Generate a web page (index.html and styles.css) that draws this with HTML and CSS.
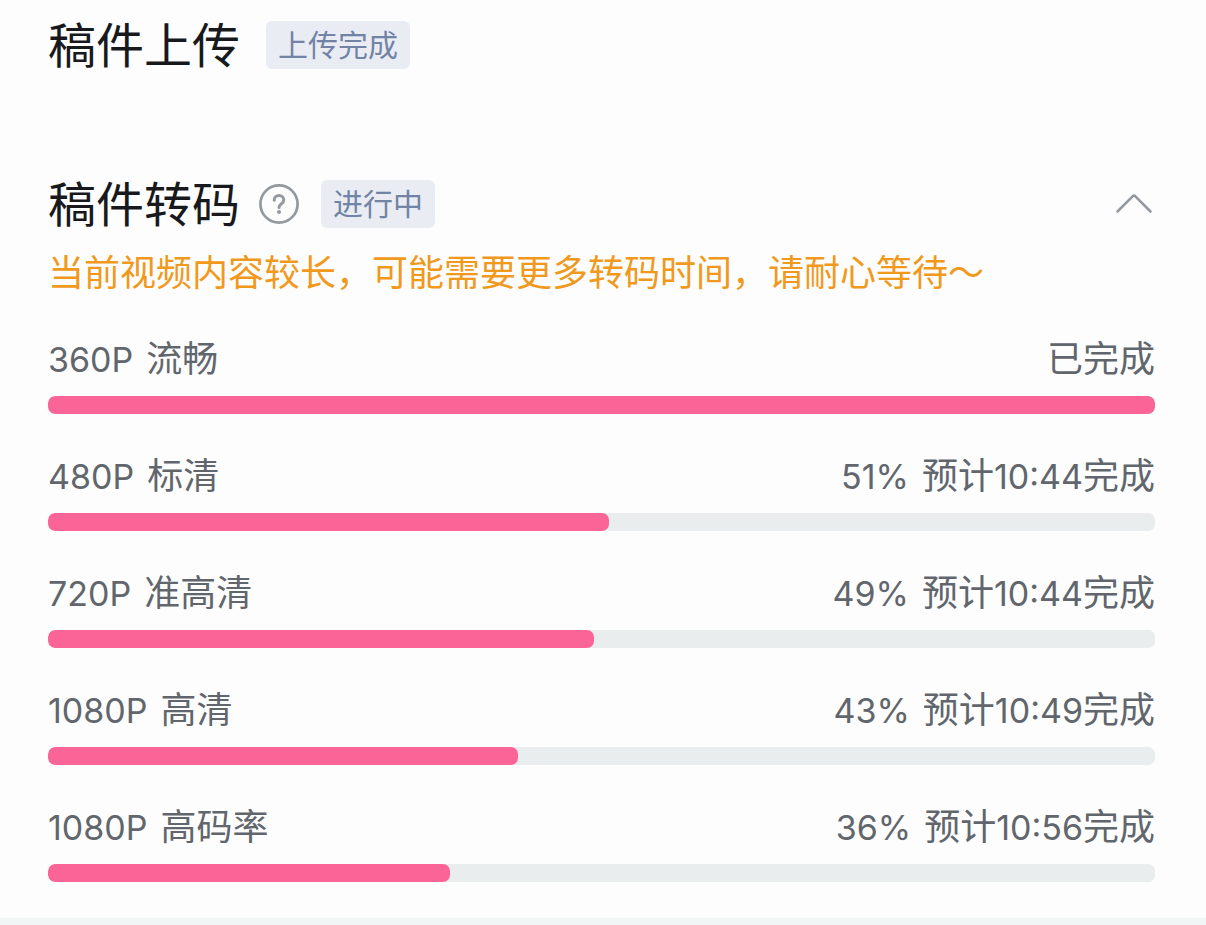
FILE: index.html
```html
<!DOCTYPE html>
<html lang="zh-CN">
<head>
  <meta charset="UTF-8">
  <meta name="viewport" content="width=device-width, initial-scale=1.0">
  <title>稿件进度</title>
  <link rel="stylesheet" href="styles.css">
</head>
<body>
  <main class="panel">
    <section class="upload">
      <div class="section-head">
        <h2>稿件上传</h2>
        <span class="badge badge-upload">上传完成</span>
      </div>
    </section>

    <section class="transcode">
      <div class="section-head">
        <h2>稿件转码</h2>
        <button class="icon-btn help-btn" type="button" aria-label="转码说明">
          <svg width="40" height="40" viewBox="0 0 40 40" fill="none" stroke="currentColor" stroke-linecap="round" stroke-linejoin="round">
            <circle cx="20" cy="20" r="18.6" stroke-width="2.7"/>
            <path d="M15.2 16.2c0-2.9 2-4.7 4.8-4.7s4.8 1.9 4.8 4.5c0 2-1.2 3-2.6 4-1.4 1-2.2 1.7-2.2 3.500" stroke-width="3"/>
            <circle cx="20" cy="28" r="2.1" fill="currentColor" stroke="none"/>
          </svg>
        </button>
        <span class="badge">进行中</span>
        <button class="icon-btn toggle-btn" type="button" aria-label="收起">
          <svg width="40" height="24" viewBox="0 0 40 24" fill="none" stroke="currentColor" stroke-width="2.6" stroke-linecap="round" stroke-linejoin="round">
            <path d="M2.5 19.5L17.6 4.3Q19 3 20.4 4.3L35.5 19.5"/>
          </svg>
        </button>
      </div>
      <p class="notice">当前视频内容较长，可能需要更多转码时间，请耐心等待～</p>

      <ul class="task-list">
        <li class="task">
          <div class="task-info"><label for="p360"><span class="num">360P</span> 流畅</label><span>已完成</span></div>
          <progress id="p360" value="1000" max="1000"></progress>
        </li>
        <li class="task">
          <div class="task-info"><label for="p480"><span class="num">480P</span> 标清</label><span><span class="num">51%</span> 预计<span class="num">10:44</span>完成</span></div>
          <progress id="p480" value="507" max="1000"></progress>
        </li>
        <li class="task">
          <div class="task-info"><label for="p720"><span class="num">720P</span> 准高清</label><span><span class="num">49%</span> 预计<span class="num">10:44</span>完成</span></div>
          <progress id="p720" value="493" max="1000"></progress>
        </li>
        <li class="task">
          <div class="task-info"><label for="p1080"><span class="num">1080P</span> 高清</label><span><span class="num">43%</span> 预计<span class="num">10:49</span>完成</span></div>
          <progress id="p1080" value="425" max="1000"></progress>
        </li>
        <li class="task">
          <div class="task-info"><label for="p1080h"><span class="num">1080P</span> 高码率</label><span><span class="num">36%</span> 预计<span class="num">10:56</span>完成</span></div>
          <progress id="p1080h" value="363" max="1000"></progress>
        </li>
      </ul>
    </section>
  </main>
</body>
</html>
```
FILE: styles.css
```css
* {
  box-sizing: border-box;
}

body {
  margin: 0;
  background: #f2f5f6;
  font-family: "Liberation Sans", "Noto Sans CJK SC", sans-serif;
  color: #61666d;
}

.panel {
  background: #fdfdfd;
  padding: 21px 51px 36px 48px;
}

.upload {
  margin-bottom: 111px;
}

.section-head {
  display: flex;
  align-items: center;
  height: 48px;
}

h2 {
  margin: 0;
  padding-top: 4px;
  font-size: 48px;
  line-height: 48px;
  font-weight: 400;
  color: #18191c;
}

.badge {
  height: 48px;
  margin-left: 22px;
  padding: 0 12px;
  border-radius: 6px;
  background: #e9edf3;
  color: #7283a6;
  font-size: 30px;
  line-height: 50px;
}

.badge-upload {
  margin-left: 26px;
}

.icon-btn {
  display: flex;
  padding: 0;
  border: none;
  background: none;
  color: #9499a0;
  cursor: pointer;
}

.help-btn {
  margin-left: 19px;
}

.toggle-btn {
  margin-left: auto;
}

/* 提示 */
.notice {
  margin: 21px 0 35px;
  font-size: 36px;
  line-height: 50px;
  color: #f0991c;
}

/* 转码进度列表 */
.task-list {
  display: grid;
  gap: 37px;
  margin: 0;
  padding: 0;
  list-style: none;
}

.task-info {
  display: flex;
  justify-content: space-between;
  margin-bottom: 10px;
  font-size: 36px;
  line-height: 52px;
}

.task-info .num {
  font-family: Inter, sans-serif;
  font-size: 34px;
  line-height: 1;
}

.task-info .num:first-child {
  margin-right: 3px;
}

progress {
  display: block;
  width: 100%;
  height: 18px;
  border: none;
  border-radius: 7px;
  overflow: hidden;
  background: #eaeded;
  appearance: none;
  -webkit-appearance: none;
}

progress::-webkit-progress-bar {
  background: #eaeded;
  border-radius: 7px;
}

progress::-webkit-progress-value {
  background: #fb6496;
  border-radius: 7px;
}
```
